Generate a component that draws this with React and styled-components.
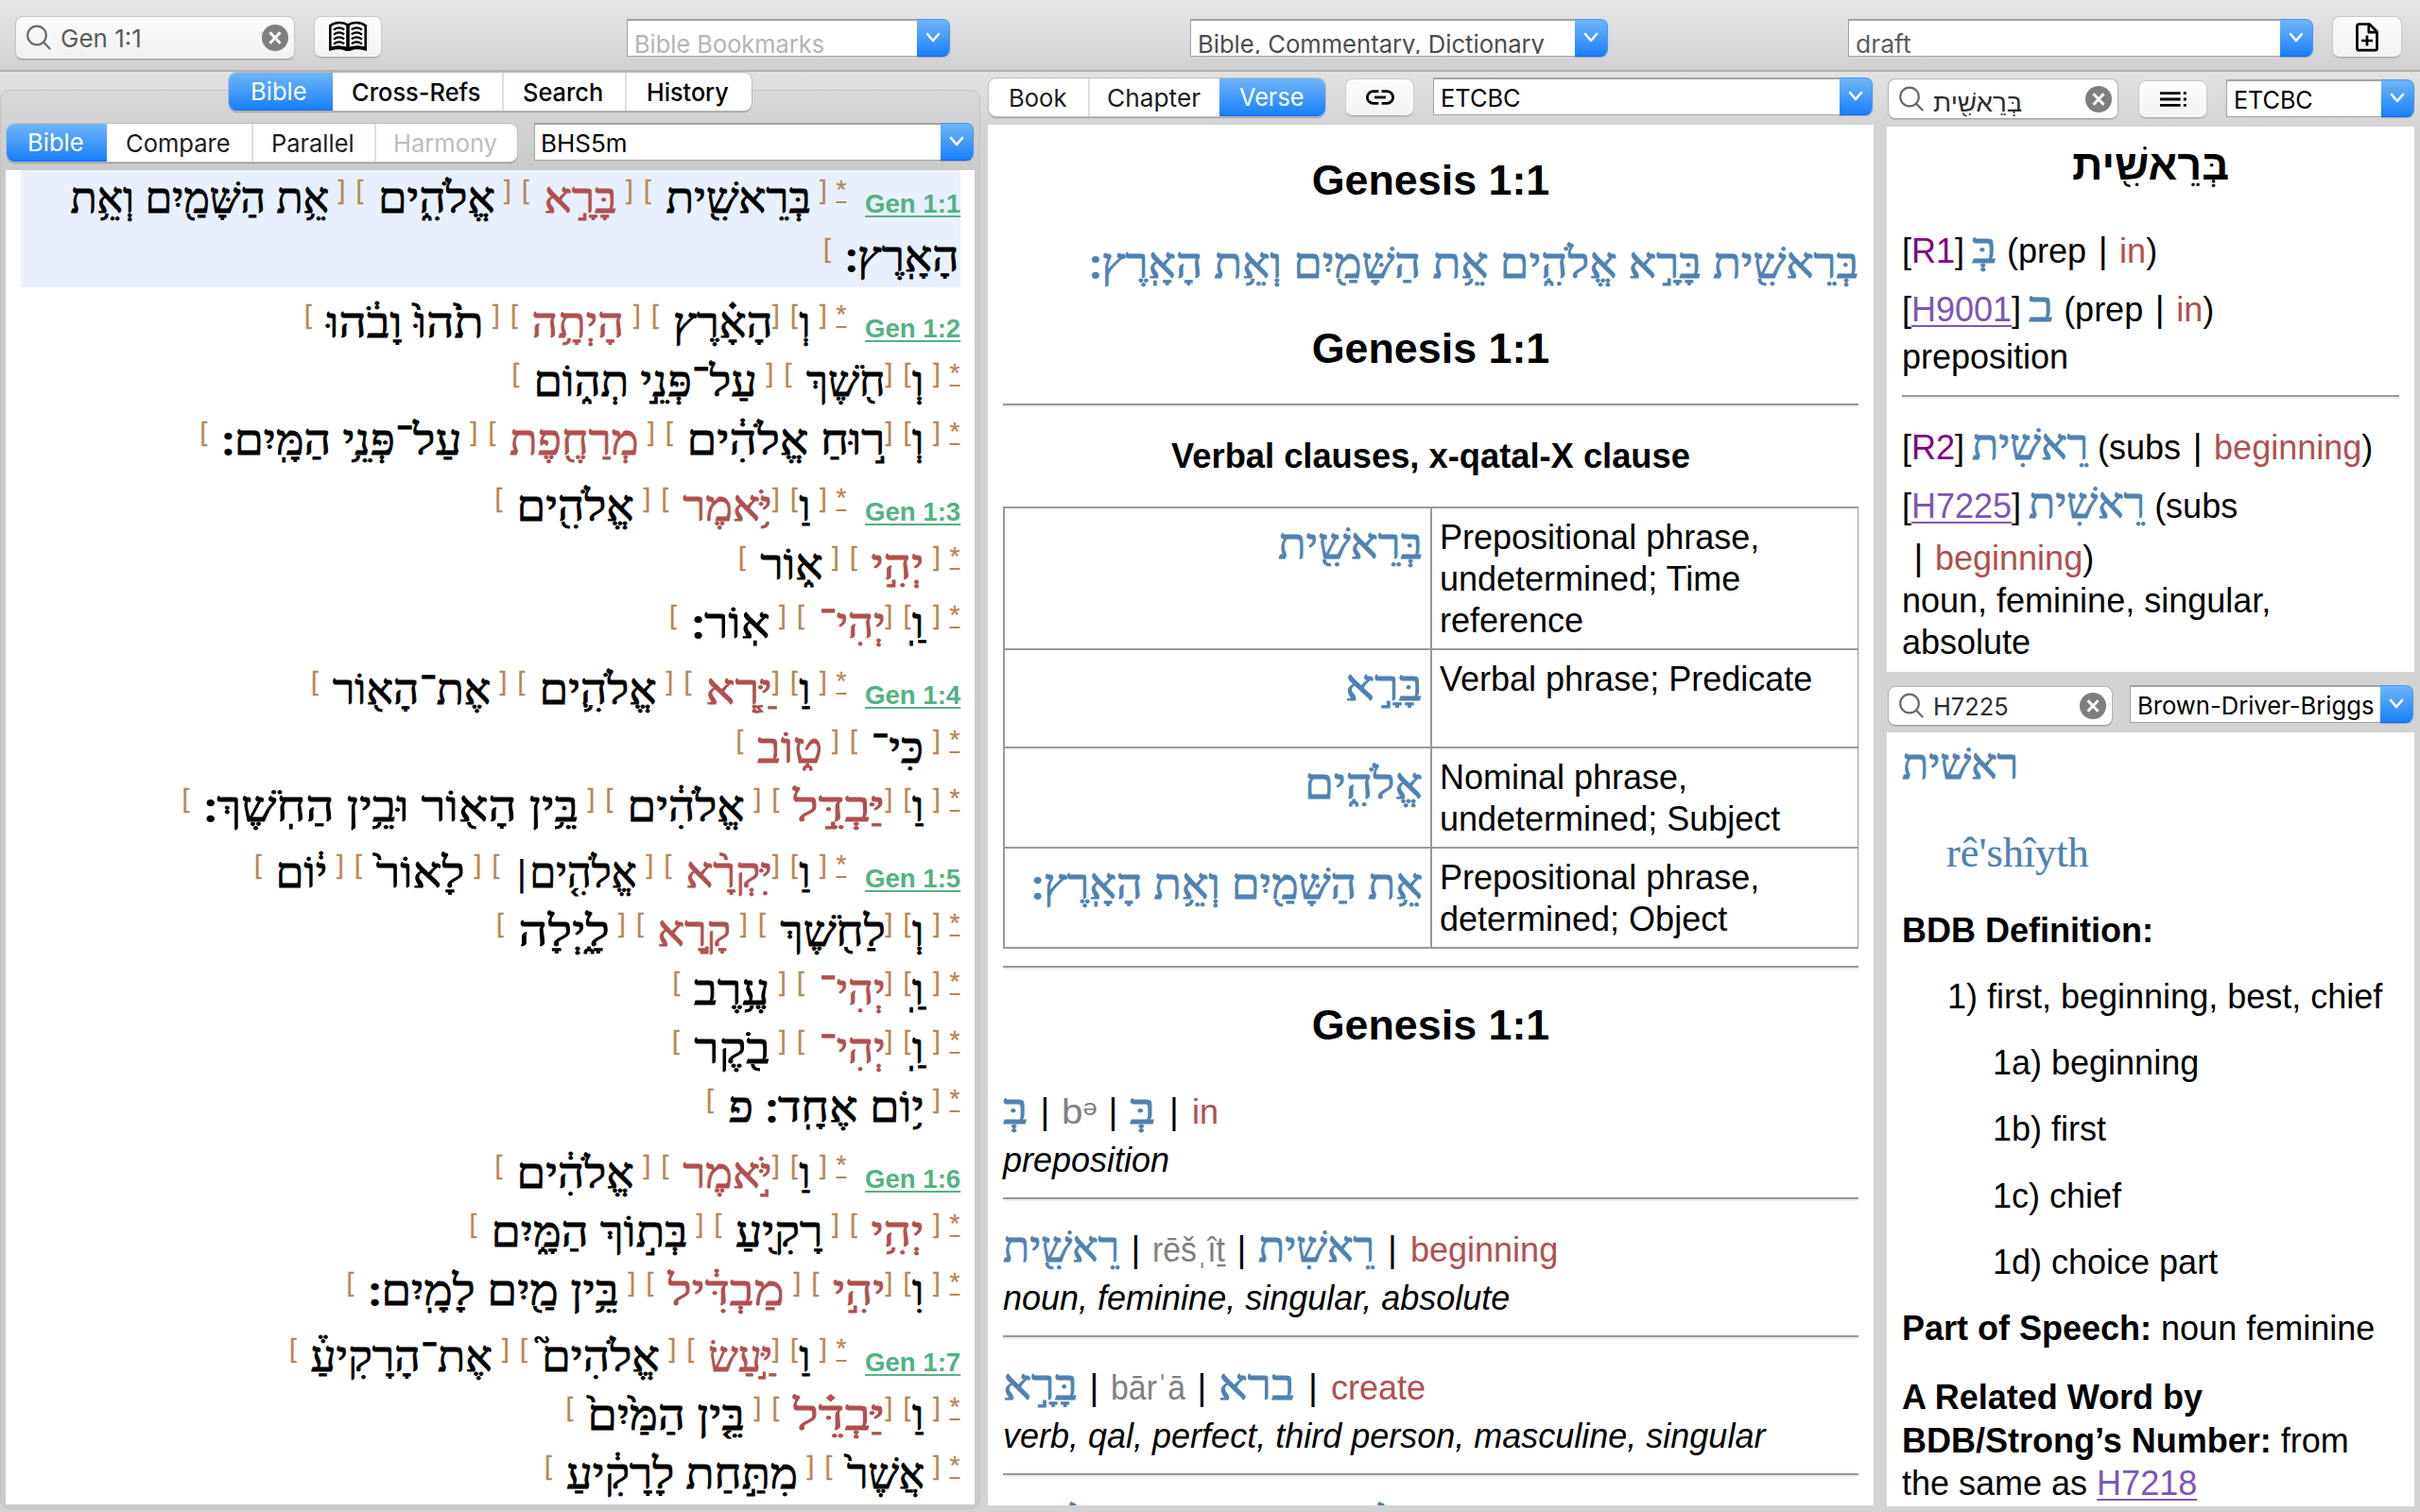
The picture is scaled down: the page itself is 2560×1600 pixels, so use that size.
import React, { useLayoutEffect, useRef, useState } from "react";
import styled, { createGlobalStyle, css } from "styled-components";

const ui = `Inter, Roboto, "Liberation Sans", sans-serif`;
const sans = `"Liberation Sans", Arial, sans-serif`;
const hebrew = `"Liberation Serif", "DejaVu Sans", serif`;

const c = {
  red: "#b05050",
  blue: "#5082b2",
  brown: "#b88655",
  green: "#53b283",
  link: "#7f56b4",
  grey: "#808080",
};

const Global = createGlobalStyle`
  * { box-sizing: border-box; }
  html, body { margin: 0; padding: 0; background: #d3d3d3; }
  body { width: 2560px; height: 1600px; overflow: hidden; font-family: ${sans}; color: #000; }
`;

/* ---------- text that fills a known width ---------- */

const FitBox = styled.span`
  display: inline-block;
  flex: none;
  width: ${(p) => p.$w}px;
  white-space: nowrap;
  text-align: ${(p) => p.$from};
`;
const FitInner = styled.span`
  display: inline-block;
  white-space: nowrap;
  transform-origin: ${(p) => p.$from} center;
`;
const SofPasuq = styled.span`
  margin-inline-start: 12px;
  -webkit-text-stroke: 2px currentColor;
`;
const Paseq = styled.span`
  font-size: 30px;
`;
const marks = (text) =>
  text.split(/([׃׀])/).map((part, i) => {
    if (part === "׃") return <SofPasuq key={i}>{part}</SofPasuq>;
    if (part === "׀") return <Paseq key={i}>{part}</Paseq>;
    return part;
  });
function Fit({ w, from = "left", children }) {
  const ref = useRef(null);
  const [scale, setScale] = useState(1);
  useLayoutEffect(() => {
    const natural = ref.current.offsetWidth;
    if (natural) setScale(w / natural);
  }, [w, children]);
  return (
    <FitBox $w={w} $from={from}>
      <FitInner ref={ref} $from={from} style={{ transform: `scaleX(${scale})` }}>
        {/[׃׀]/.test(children) ? marks(children) : children}
      </FitInner>
    </FitBox>
  );
}

/* ---------- window chrome ---------- */

const Window = styled.div`
  display: flex;
  flex-direction: column;
  width: 2560px;
  height: 1600px;
  overflow: hidden;
  background: linear-gradient(#e2e2e2 76px, #d3d3d3 136px);
`;
const Toolbar = styled.header`
  display: flex;
  align-items: flex-start;
  flex: none;
  height: 76px;
  padding: 17px 19px 0 16px;
  background: linear-gradient(#e6e6e6, #d1d1d1);
  border-bottom: 2px solid #b1b1b1;
`;
const Body = styled.main`
  display: flex;
  flex: 1;
  min-height: 0;
`;
const Spacer = styled.div`
  flex: none;
  width: ${(p) => p.$w}px;
`;

const Search = styled.label`
  display: flex;
  align-items: center;
  flex: none;
  width: ${(p) => p.$w}px;
  height: ${(p) => p.$h}px;
  padding: 0 6px 0 11px;
  border: 1px solid ${(p) => (p.$soft ? "#c6c6c6" : "#b4b4b4")};
  border-bottom-color: #a2a2a2;
  border-radius: 8px;
  background: ${(p) => (p.$soft ? "linear-gradient(#fdfdfd, #f0f0f0)" : "#fff")};
  box-shadow: 0 1px 1px rgba(0, 0, 0, 0.12);
  font: 26px/32px ${ui};
  color: ${(p) => (p.$soft ? "#5c5c5c" : "#2e2e2e")};
`;
const SearchText = styled.span`
  flex: 1;
  margin: ${(p) => p.$drop || 2}px 0 0 10px;
`;
const Ico = styled.svg`
  display: block;
  flex: none;
`;
const SearchIcon = () => (
  <Ico width="26" height="30" viewBox="0 0 26 30" fill="none" stroke="#6a6a6a" strokeWidth="2.2" strokeLinecap="round">
    <circle cx="11" cy="12.5" r="9.8" />
    <path d="M18.2 19.8L24.6 26.4" />
  </Ico>
);
const ClearIcon = () => (
  <Ico width="28" height="28" viewBox="0 0 28 28">
    <circle cx="14" cy="14" r="14" fill="#7f7f7f" />
    <path d="M8.5 8.3L19.5 19.7M19.5 8.3L8.5 19.7" stroke="#fff" strokeWidth="3" fill="none" />
  </Ico>
);

const Button = styled.button`
  display: flex;
  align-items: center;
  justify-content: center;
  flex: none;
  width: ${(p) => p.$w}px;
  height: ${(p) => p.$h}px;
  margin-top: ${(p) => p.$mt || 0}px;
  padding: 0;
  border: 1px solid #c8c8c8;
  border-bottom-color: #aeaeae;
  border-radius: 8px;
  background: linear-gradient(#fcfcfc, #f3f3f3);
  box-shadow: 0 1px 1px rgba(0, 0, 0, 0.1);
`;

const Combo = styled.div`
  display: flex;
  flex: none;
  width: ${(p) => p.$w}px;
  height: 40px;
  margin-top: ${(p) => p.$mt || 0}px;
`;
const ComboInput = styled.div`
  flex: 1;
  min-width: 0;
  padding-left: ${(p) => p.$pad || 7}px;
  border: 1px solid #a3a3a3;
  border-right: 0;
  border-top-width: 2px;
  background: #fff;
  overflow: hidden;
  white-space: nowrap;
  font: 26px/36px ${ui};
  color: ${(p) => p.$color || "#000"};
`;
/* the toolbar's combo boxes sit low and cut the descenders off */
const ComboText = styled.div`
  height: ${(p) => (p.$cut ? 35 : 37)}px;
  overflow: hidden;
  padding-top: ${(p) => (p.$cut ? 7 : 2)}px;
`;
const ComboArrow = styled.div`
  display: flex;
  align-items: center;
  justify-content: center;
  width: 35px;
  border: 1px solid #4397f0;
  border-bottom-color: #1467ee;
  border-left: 0;
  border-radius: 0 8px 8px 0;
  background: linear-gradient(#70b5f8, #1a80fd);
  box-shadow: 0 1px 1px rgba(0, 0, 0, 0.2);
`;
function ComboBox({ w, tw, text, cut, color, mt, pad }) {
  return (
    <Combo $w={w} $mt={mt}>
      <ComboInput $color={color} $pad={pad}>
        <ComboText $cut={cut}>
          <Fit w={tw}>{text}</Fit>
        </ComboText>
      </ComboInput>
      <ComboArrow>
        <Ico width="16" height="12" viewBox="0 0 16 12" fill="none" stroke="#fff" strokeWidth="2.6" strokeLinecap="round" strokeLinejoin="round">
          <path d="M2 2L8 9L14 2" />
        </Ico>
      </ComboArrow>
    </Combo>
  );
}

const Segments = styled.div`
  display: flex;
  flex: none;
  height: 40px;
  margin-top: ${(p) => p.$mt || 0}px;
  border-radius: 8px;
  overflow: hidden;
  background: #fff;
  box-shadow: 0 0 0 1px #bdbdbd, 0 1.5px 1px rgba(0, 0, 0, 0.25);
`;
const Segment = styled.div`
  display: flex;
  align-items: center;
  justify-content: center;
  width: ${(p) => p.$w}px;
  padding: 1px 3px 0 0;
  font: ${(p) => (p.$strong ? 500 : 400)} 26px/38px ${ui};
  color: ${(p) => (p.$off ? "#bdbdbd" : p.$strong ? "#000" : "#1c1c1c")};
  border-left: ${(p) => (p.$divided ? "2px solid #dedede" : "0")};
  ${(p) =>
    p.$on &&
    css`
      color: #fff;
      font-weight: 400;
      background: linear-gradient(#70b5f8, #1a80fd);
      border-bottom: 1px solid #1467ee;
    `}
`;
const SegmentBar = ({ items, strong, mt }) => (
  <Segments $mt={mt}>
    {items.map(([label, w, tw, state], i) => (
      <Segment
        key={label}
        $w={w}
        $strong={strong}
        $on={state === "on"}
        $off={state === "off"}
        $divided={i > 0 && state !== "on" && items[i - 1][3] !== "on"}
      >
        <Fit w={tw}>{label}</Fit>
      </Segment>
    ))}
  </Segments>
);

/* ---------- left column ---------- */

const Left = styled.section`
  display: flex;
  flex-direction: column;
  width: 1037px;
  padding-top: 19px;
`;
const Group = styled.div`
  display: flex;
  flex-direction: column;
  flex: 1;
  min-height: 0;
  margin-bottom: 3px;
  border: 1px solid #c2c2c2;
  border-radius: 10px;
  background: linear-gradient(#d8d8d8, #cacaca 84px);
`;
const Tabs = styled.nav`
  display: flex;
  justify-content: center;
  margin: -19px 0 14px -1px;
  flex: none;
`;
const Bar = styled.div`
  display: flex;
  align-items: flex-start;
  flex: none;
  height: ${(p) => p.$h}px;
  padding: ${(p) => p.$pt || 0}px 0 0 ${(p) => p.$pl || 0}px;
`;
const Verses = styled.div`
  width: 1025px;
  height: 1412px;
  margin-left: 5px;
  padding: 0 15px 0 16px;
  overflow: hidden;
  background: #fff;
  direction: rtl;
`;
const Verse = styled.div`
  margin-bottom: 8px;
  background: ${(p) => (p.$lit ? "#e8f0fd" : "transparent")};
`;
const VerseLine = styled.div`
  display: flex;
  align-items: baseline;
  height: 62px;
  font: 36px/67px ${sans};
`;
const Ref = styled.a`
  flex: none;
  width: 101px;
  margin-left: 19px;
  font: bold 27.6px/60px ${sans};
  color: ${c.green};
  white-space: nowrap;
  text-decoration: underline;
  text-decoration-thickness: 2px;
  text-underline-offset: 3px;
  direction: ltr;
`;
const raised = css`
  position: relative;
  top: -15px;
  flex: none;
  width: ${(p) => p.$w}px;
  font: 28px/30px ${sans};
  color: ${c.brown};
  text-align: center;
  -webkit-text-stroke: 0.3px currentColor;
`;
const Star = styled.a`
  ${raised}
  margin-left: 9px;
  text-decoration: underline;
  text-decoration-thickness: 2px;
  text-underline-offset: 3px;
`;
const Bracket = styled.span`
  ${raised}
  margin-left: ${(p) => p.$gap || 0}px;
`;
const Word = styled.span`
  flex: none;
  margin: 0 ${(p) => p.$right}px 0 ${(p) => p.$left}px;
  font: 45px/61px ${hebrew};
  color: ${(p) => (p.$red ? c.red : "#000")};
  -webkit-text-stroke: 0.9px currentColor;
`;

/* Each word: [text, distance between its brackets, kind]
   kind: p = prefix joined to the next word, r = verb in red,
   n = runs on to the next line, c = carried over from the line before */
const verses = [
  {
    ref: "Gen 1:1",
    lit: true,
    lines: [
      [
        ["בְּרֵאשִׁ֖ית", 186],
        ["בָּרָ֣א", 110, "r"],
        ["אֱלֹהִ֑ים", 156.5],
        ["אֵ֥ת הַשָּׁמַ֖יִם וְאֵ֥ת", 306, "n"],
      ],
      [["הָאָֽרֶץ׃", 145, "c"]],
    ],
  },
  {
    ref: "Gen 1:2",
    lines: [
      [["וְ", 31, "p"], ["הָאָ֗רֶץ", 128], ["הָיְתָ֥ה", 130, "r"], ["תֹ֙הוּ֙ וָבֹ֔הוּ", 199]],
      [["וְ", 31.5, "p"], ["חֹ֖שֶׁךְ", 107], ["עַל־פְּנֵ֣י תְה֑וֹם", 269]],
      [["וְ", 31.5, "p"], ["ר֣וּחַ אֱלֹהִ֔ים", 232.5], ["מְרַחֶ֖פֶת", 168.5, "r"], ["עַל־פְּנֵ֥י הַמָּֽיִם׃", 286]],
    ],
  },
  {
    ref: "Gen 1:3",
    lines: [
      [["וַ", 31, "p"], ["יֹּ֥אמֶר", 117.5, "r"], ["אֱלֹהִ֖ים", 157]],
      [["יְהִ֣י", 88, "r"], ["א֑וֹר", 99]],
      [["וַֽ", 31.5, "p"], ["יְהִי־", 93.5, "r"], ["אֽוֹר׃", 116]],
    ],
  },
  {
    ref: "Gen 1:4",
    lines: [
      [["וַ", 31, "p"], ["יַּ֧רְא", 93.5, "r"], ["אֱלֹהִ֛ים", 157], ["אֶת־הָא֖וֹר", 199.5]],
      [["כִּי־", 88], ["ט֑וֹב", 101.5, "r"]],
      [["וַ", 31.5, "p"], ["יַּבְדֵּ֣ל", 120, "r"], ["אֱלֹהִ֔ים", 157], ["בֵּ֥ין הָא֖וֹר וּבֵ֥ין הַחֹֽשֶׁךְ׃", 429]],
    ],
  },
  {
    ref: "Gen 1:5",
    lines: [
      [["וַ", 31, "p"], ["יִּקְרָ֨א", 114.5, "r"], ["אֱלֹהִ֤ים׀", 163], ["לָאוֹר֙", 126.5], ["י֔וֹם", 87]],
      [["וְ", 31.5, "p"], ["לַחֹ֖שֶׁךְ", 134.5], ["קָ֣רָא", 110, "r"], ["לָ֑יְלָה", 129]],
      [["וַֽ", 31.5, "p"], ["יְהִי־", 93.5, "r"], ["עֶ֥רֶב", 112.5]],
      [["וַֽ", 31.5, "p"], ["יְהִי־", 93.5, "r"], ["בֹ֖קֶר", 113]],
      [["י֥וֹם אֶחָֽד׃ פ", 240]],
    ],
  },
  {
    ref: "Gen 1:6",
    lines: [
      [["וַ", 31, "p"], ["יֹּ֣אמֶר", 117.5, "r"], ["אֱלֹהִ֔ים", 157]],
      [["יְהִ֥י", 88, "r"], ["רָקִ֖יעַ", 124.5], ["בְּת֣וֹךְ הַמָּ֑יִם", 240]],
      [["וִ", 31.5, "p"], ["יהִ֣י", 78, "r"], ["מַבְדִּ֔יל", 156, "r"], ["בֵּ֥ין מַ֖יִם לָמָֽיִם׃", 298]],
    ],
  },
  {
    ref: "Gen 1:7",
    lines: [
      [["וַ", 31, "p"], ["יַּ֣עַשׂ", 90.5, "r"], ["אֱלֹהִים֮", 157.5], ["אֶת־הָרָקִיעַ֒", 225]],
      [["וַ", 31.5, "p"], ["יַּבְדֵּ֗ל", 120, "r"], ["בֵּ֤ין הַמַּ֙יִם֙", 199]],
      [["אֲשֶׁר֙", 114.5], ["מִתַּ֣חַת לָרָקִ֔יעַ", 277.5]],
    ],
  },
];

function HebrewLine({ words, label }) {
  let joined = false;
  const carried = words[0][2] === "c";
  return (
    <VerseLine>
      {label && <Ref>{label}</Ref>}
      {!carried && <Star $w={12}>*</Star>}
      {!carried && <Bracket $w={8}>[</Bracket>}
      {words.map(([text, slot, kind = ""], i) => {
        const prefix = kind === "p";
        const right = kind === "c" ? 2 : joined ? 0 : 9.5;
        const left = prefix ? 1 : 15;
        joined = prefix;
        const last = i === words.length - 1;
        return (
          <React.Fragment key={i}>
            <Word $right={right} $left={left} $red={kind === "r"}>
              <Fit from="right" w={slot - 8 - right - left}>
                {text}
              </Fit>
            </Word>
            {kind !== "n" && (
              <Bracket $w={8} $gap={last ? 0 : 11}>
                ]
              </Bracket>
            )}
            {!last && <Bracket $w={8}>[</Bracket>}
          </React.Fragment>
        );
      })}
    </VerseLine>
  );
}

/* ---------- reading panels ---------- */

const Middle = styled.section`
  display: flex;
  flex-direction: column;
  width: 937px;
  margin-left: 8px;
  padding-top: 6px;
`;
const Right = styled.section`
  display: flex;
  flex-direction: column;
  width: 558px;
  margin-left: 14px;
  padding-top: 7px;
`;
const Page = styled.article`
  flex: none;
  height: ${(p) => p.$h}px;
  padding: 0 16px;
  overflow: hidden;
  background: #fff;
  font: 36px/44px ${sans};
`;
const Title = styled.h1`
  margin: 0;
  height: ${(p) => p.$h}px;
  font: bold ${(p) => p.$size || 44.8}px/${(p) => p.$lh || p.$h}px ${sans};
  text-align: center;
`;
const Rule = styled.div`
  height: 4px;
  margin-top: ${(p) => p.$mt || 0}px;
  border-top: 2px solid #999;
  border-bottom: 2px solid #eee;
`;
/* keeps the baseline of a row where the Latin text would put it */
const strut = css`
  &::before {
    content: "\\200b";
  }
`;
const Row = styled.div`
  display: flex;
  align-items: baseline;
  justify-content: ${(p) => (p.$end ? "flex-end" : "flex-start")};
  height: ${(p) => p.$h}px;
  line-height: ${(p) => p.$h}px;
  margin-top: ${(p) => p.$mt || 0}px;
  padding-left: ${(p) => p.$pl || 0}px;
  white-space: pre;
  font-style: ${(p) => (p.$italic ? "italic" : "normal")};
  ${strut}
`;
const HebrewSpan = styled.span`
  flex: none;
  font: ${(p) => p.$size || 45}px/40px ${hebrew};
  color: ${c.blue};
  direction: ${(p) => (p.$rtl ? "rtl" : "ltr")};
  -webkit-text-stroke: ${(p) => (p.$thin ? 0.2 : 0.9)}px currentColor;
`;
const Heb = ({ w, children, from }) => (
  <HebrewSpan $rtl={from === "right"}>
    <Fit w={w} from={from}>
      {children}
    </Fit>
  </HebrewSpan>
);
const Pipe = styled.span`
  flex: none;
  width: ${(p) => p.$w || 35}px;
  font-size: 38px;
  line-height: 36px;
  text-align: center;
`;
const Tint = styled.span`
  color: ${(p) => p.$color};
`;
const Link = styled.a`
  color: ${c.link};
  text-decoration: underline;
  text-decoration-thickness: 2px;
  text-underline-offset: 4px;
`;
const Table = styled.div`
  display: grid;
  grid-template-columns: 450px 450px;
  gap: 2px;
  padding: 2px 0;
  margin-top: 1px;
  border: solid #999;
  border-width: 0 2px;
  background: #999;
`;
const Cell = styled.div`
  height: ${(p) => p.$h}px;
  padding: 9px 8px 0;
  background: #fff;
  ${(p) =>
    p.$heb &&
    css`
      display: flex;
      align-items: baseline;
      justify-content: flex-end;
      line-height: 64px;
      ${strut}
    `}
`;
const Entry = styled.div`
  padding-top: 21.5px;
`;
const P = styled.p`
  margin: ${(p) => p.$mt || 0}px 0 0;
  padding-left: ${(p) => p.$pl || 0}px;
  line-height: ${(p) => p.$lh}px;
  white-space: nowrap;
`;

const phrases = [
  [148, "בְּרֵאשִׁ֖ית", 153, ["Prepositional phrase,", "undetermined; Time", "reference"]],
  [102, "בָּרָ֣א", 82, ["Verbal phrase; Predicate"]],
  [104, "אֱלֹהִ֑ים", 125, ["Nominal phrase,", "undetermined; Subject"]],
  [104, "אֵ֥ת הַשָּׁמַ֖יִם וְאֵ֥ת הָאָֽרֶץ׃", 414, ["Prepositional phrase,", "determined; Object"]],
];
const entries = [
  ["בְּ", 27, "bᵊ", 37, "בְּ", 28, "in", "preposition"],
  ["רֵאשִׁ֖ית", 123, "rēšˌîṯ", 77, "רֵאשִׁית", 123, "beginning", "noun, feminine, singular, absolute"],
  ["בָּרָ֣א", 79, "bārˈā", 79, "ברא", 81, "create", "verb, qal, perfect, third person, masculine, singular"],
  ["אֱלֹהִ֑ים", 123, "ʔᵉlōhˈîm", 133, "אֱלֹהִים", 123, "god(s)", "noun, masculine, plural, absolute"],
];

/* ---------- icons ---------- */

const BookIcon = () => (
  <Ico width="42" height="34" viewBox="0 0 42 34" fill="none" stroke="#000">
    <path d="M2.3 29.5V5.2C7.5 1 16 1 21 4.6C26 1 34.5 1 39.7 5.2V29.5C34 27 26 27 21 30C16 27 8 27 2.3 29.5Z" strokeWidth="2.6" fill="#fff" />
    <path d="M21 4.5V30" strokeWidth="3.6" />
    <path d="M1.2 28.5C8 25.6 16 26 21 28.6C26 26 34 25.6 40.8 28.5V32C34 29.6 26 30 23.4 32H18.6C16 30 8 29.6 1.2 32Z" fill="#000" stroke="none" />
    <path d="M6 9.6C9.5 7 14 7 17.2 9.4M6 14.6C9.5 12 14 12 17.2 14.4M6 19.6C9.5 17 14 17 17.2 19.4M6 24.6C9.5 22 14 22 17.2 24.4M24.8 9.4C28 7 32.5 7 36 9.6M24.8 14.4C28 12 32.5 12 36 14.6M24.8 19.4C28 17 32.5 17 36 19.6M24.8 24.4C28 22 32.5 22 36 24.6" strokeWidth="2.3" />
  </Ico>
);
const LinkIcon = () => (
  <Ico width="30" height="16" viewBox="0 0 30 16" fill="none" stroke="#000" strokeWidth="2.8">
    <path d="M13.4 1.6H7.8A6.4 6.4 0 0 0 7.8 14.4H13.4M16.6 1.6H22.2A6.4 6.4 0 0 1 22.2 14.4H16.6" />
    <path d="M9 8H21" />
  </Ico>
);
const ListIcon = () => (
  <Ico width="28" height="16" viewBox="0 0 28 16" stroke="#000" strokeWidth="2.8">
    <path d="M0 1.6H21.6M0 8H21.6M0 14.4H21.6M24.8 1.6H27.8M24.8 8H27.8M24.8 14.4H27.8" />
  </Ico>
);
const NewDocIcon = () => (
  <Ico width="24" height="31" viewBox="0 0 24 31" fill="none" stroke="#000" strokeWidth="2.7" strokeLinejoin="round">
    <path d="M14.5 1.5H3.5Q1.5 1.5 1.5 3.5V27.2Q1.5 29.2 3.5 29.2H20.5Q22.5 29.2 22.5 27.2V9.5Z" />
    <path d="M13.8 2V10.2H22" />
    <path d="M12 13.5V24.5M6 19H18" />
  </Ico>
);

export default function App() {
  return (
    <Window>
      <Global />
      <Toolbar>
        <Search $w={296} $h={46} $soft>
          <SearchIcon />
          <SearchText>
            <Fit w={86}>Gen 1:1</Fit>
          </SearchText>
          <ClearIcon />
        </Search>
        <Spacer $w={20} />
        <Button $w={72} $h={44} aria-label="Library">
          <BookIcon />
        </Button>
        <Spacer $w={259} />
        <ComboBox w={342} tw={201} text="Bible Bookmarks" cut color="#b4b4b4" mt={3} />
        <Spacer $w={254} />
        <ComboBox w={442} tw={367} text="Bible, Commentary, Dictionary" cut color="#4c4c4c" mt={3} />
        <Spacer $w={254} />
        <ComboBox w={492} tw={59} text="draft" cut color="#5c5c5c" mt={3} />
        <Spacer $w={20} />
        <Button $w={74} $h={44} aria-label="New note">
          <NewDocIcon />
        </Button>
      </Toolbar>

      <Body>
        <Left>
          <Group>
            <Tabs>
              <SegmentBar
                strong
                items={[
                  ["Bible", 110, 60, "on"],
                  ["Cross-Refs", 179, 136],
                  ["Search", 130, 85],
                  ["History", 134, 87],
                ]}
              />
            </Tabs>
            <Bar $h={49} $pl={6}>
              <SegmentBar
                items={[
                  ["Bible", 106, 60, "on"],
                  ["Compare", 153, 111],
                  ["Parallel", 130, 88],
                  ["Harmony", 151, 110, "off"],
                ]}
              />
              <Spacer $w={18} />
              <ComboBox w={465} tw={92} text="BHS5m" mt={-1} pad={6} />
            </Bar>
            <Verses>
              {verses.map((v) => (
                <Verse key={v.ref} $lit={v.lit}>
                  {v.lines.map((words, i) => (
                    <HebrewLine key={i} words={words} label={i === 0 ? v.ref : null} />
                  ))}
                </Verse>
              ))}
            </Verses>
          </Group>
        </Left>

        <Middle>
          <Bar $h={50} $pl={1}>
            <SegmentBar
              mt={1}
              items={[
                ["Book", 105, 61],
                ["Chapter", 139, 99],
                ["Verse", 112, 68, "on"],
              ]}
            />
            <Spacer $w={21} />
            <Button $w={73} $h={40} $mt={1} aria-label="Link panes">
              <LinkIcon />
            </Button>
            <Spacer $w={20} />
            <ComboBox w={465} tw={85} text="ETCBC" />
          </Bar>
          <Page $h={1461}>
            <Title $h={117}>Genesis 1:1</Title>
            <Row $h={65} $end>
              <Heb w={814} from="right">
                בְּרֵאשִׁ֖ית בָּרָ֣א אֱלֹהִ֑ים אֵ֥ת הַשָּׁמַ֖יִם וְאֵ֥ת הָאָֽרֶץ׃
              </Heb>
            </Row>
            <Title $h={109}>Genesis 1:1</Title>
            <Rule $mt={4} />
            <Title $h={104} $size={36.3}>
              Verbal clauses, x-qatal-X clause
            </Title>
            <Table>
              {phrases.map(([h, heb, w, lines]) => (
                <React.Fragment key={heb}>
                  <Cell $h={h} $heb>
                    <Heb w={w} from="right">
                      {heb}
                    </Heb>
                  </Cell>
                  <Cell $h={h}>
                    {lines.map((l) => (
                      <div key={l}>{l}</div>
                    ))}
                  </Cell>
                </React.Fragment>
              ))}
            </Table>
            <Rule $mt={18} />
            <Title $h={99} $lh={116}>
              Genesis 1:1
            </Title>
            {entries.map(([word, w1, sound, w2, lex, w3, gloss, parse], i) => (
              <Entry key={i}>
                <Row $h={60}>
                  <Heb w={w1}>{word}</Heb>
                  <Pipe>|</Pipe>
                  <Tint $color={c.grey}>
                    <Fit w={w2}>{sound}</Fit>
                  </Tint>
                  <Pipe>|</Pipe>
                  <Heb w={w3}>{lex}</Heb>
                  <Pipe $w={38}>|</Pipe>
                  <Tint $color={c.red}>{gloss}</Tint>
                </Row>
                <Row $h={41} $italic>
                  {parse}
                </Row>
                <Rule $mt={19.5} />
              </Entry>
            ))}
          </Page>
        </Middle>

        <Right>
          <Bar $h={51} $pl={1}>
            <Search $w={244} $h={43}>
              <SearchIcon />
              <SearchText $drop={8}>
                <Fit w={94}>בְּרֵאשִׁ֖ית</Fit>
              </SearchText>
              <ClearIcon />
            </Search>
            <Spacer $w={21} />
            <Button $w={73} $h={40} $mt={2} aria-label="List view">
              <ListIcon />
            </Button>
            <Spacer $w={20} />
            <ComboBox w={199} tw={84} text="ETCBC" mt={1} />
          </Bar>
          <Page $h={577}>
            <Title $h={82} $size={44}>
              <Fit w={166}>בְּרֵאשִׁ֖ית</Fit>
            </Title>
            <Row $h={62} $mt={19}>
              [<Tint $color="#800080">R1</Tint>]
              <Spacer $w={8} />
              <Heb w={27}>בְּ</Heb>
              <Spacer $w={10} />
              (prep
              <Pipe $w={35}>|</Pipe>
              <Tint $color={c.red}>in</Tint>)
            </Row>
            <Row $h={62}>
              [<Link>H9001</Link>]
              <Spacer $w={8} />
              <Heb w={27}>ב</Heb>
              <Spacer $w={10} />
              (prep
              <Pipe $w={35}>|</Pipe>
              <Tint $color={c.red}>in</Tint>)
            </Row>
            <Row $h={37}>preposition</Row>
            <Rule $mt={22} />
            <Row $h={62} $mt={21}>
              [<Tint $color="#800080">R2</Tint>]
              <Spacer $w={8} />
              <Heb w={123}>רֵאשִׁית</Heb>
              <Spacer $w={10} />
              (subs
              <Pipe $w={35}>|</Pipe>
              <Tint $color={c.red}>beginning</Tint>)
            </Row>
            <Row $h={62}>
              [<Link>H7225</Link>]
              <Spacer $w={8} />
              <Heb w={123}>רֵאשִׁית</Heb>
              <Spacer $w={10} />
              (subs
            </Row>
            <Row $h={47}>
              <Pipe $w={35}>|</Pipe>
              <Tint $color={c.red}>beginning</Tint>)
            </Row>
            <Row $h={44}>noun, feminine, singular,</Row>
            <Row $h={44}>absolute</Row>
          </Page>

          <Bar $h={64} $pl={1} $pt={15}>
            <Search $w={238} $h={42}>
              <SearchIcon />
              <SearchText>
                <Fit w={80}>H7225</Fit>
              </SearchText>
              <ClearIcon />
            </Search>
            <Spacer $w={18} />
            <ComboBox w={300} tw={250} text="Brown-Driver-Briggs" mt={-1} />
          </Bar>
          <Page $h={819}>
            <Row $h={74}>
              <Heb w={123}>ראשׁית</Heb>
            </Row>
            <Row $h={111} $pl={47}>
              <HebrewSpan $size={44} $thin>
                <Fit w={151}>rê'shîyth</Fit>
              </HebrewSpan>
            </Row>
            <P $lh={50}>
              <b>BDB Definition:</b>
            </P>
            <P $lh={70.2} $mt={10} $pl={48}>
              1) first, beginning, best, chief
            </P>
            <P $lh={70.2} $pl={96}>1a) beginning</P>
            <P $lh={70.2} $pl={96}>1b) first</P>
            <P $lh={70.2} $pl={96}>1c) chief</P>
            <P $lh={70.2} $pl={96}>1d) choice part</P>
            <P $lh={70.2}>
              <b>Part of Speech:</b> noun feminine
            </P>
            <P $lh={45.3} $mt={15}>
              <b>A Related Word by</b>
              <br />
              <b>BDB/Strong’s Number:</b> from
              <br />
              the same as <Link>H7218</Link>
            </P>
          </Page>
        </Right>
      </Body>
    </Window>
  );
}
